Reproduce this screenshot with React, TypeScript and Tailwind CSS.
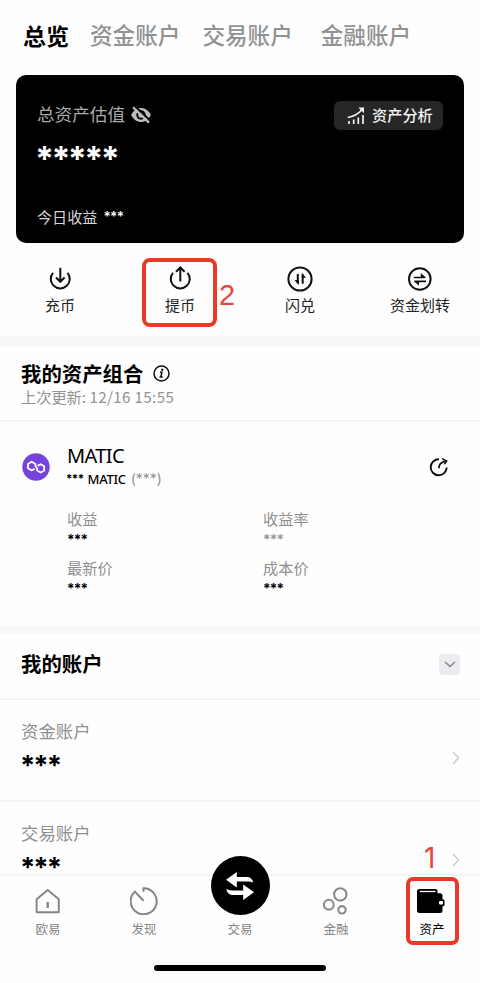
import type { ReactNode } from "react";
import clsx from "clsx";

const tabs = [
  { label: "资金账户", className: "ml-[21px]" },
  { label: "交易账户", className: "ml-[22px]" },
  { label: "金融账户", className: "ml-[28px]" },
];

function Mask({ count = 3, className }: { count?: number; className?: string }) {
  return <span className={clsx("block whitespace-nowrap font-['Inter',sans-serif]", className)}>{"*".repeat(count)}</span>;
}

function EyeOffIcon() {
  return (
    <svg width="20" height="18" viewBox="0 0 20 18" fill="none" className="mt-[2px]">
      <path d="M.2 9C2.400 4.300 6 2 10 2S17.600 4.300 19.800 9C17.600 13.700 14 16 10 16S2.400 13.700.2 9Z" fill="#bdbdbd" />
      <circle cx="10" cy="9" r="4.700" fill="#000" />
      <circle cx="10" cy="9" r="2.800" fill="#bdbdbd" />
      <path d="M3.600-.2 20 15.300" stroke="#000" strokeWidth="2" />
      <path d="M2 1.200 18 16.600" stroke="#bdbdbd" strokeWidth="2.200" />
    </svg>
  );
}

function GrowthIcon() {
  return (
    <svg width="18" height="18" viewBox="0 0 18 18" fill="none" stroke="#f2f2f2" strokeWidth="1.700" className="mt-[2px]">
      <path d="M2 17v-3M6.700 17v-4.500M11.300 17V10.500M16 17V8" />
      <path d="M.8 10.500C6 9.800 11 7.200 15 2.800" />
      <path d="M11.300.6H17V6.300Z" fill="#f2f2f2" stroke="none" />
    </svg>
  );
}

function DepositIcon() {
  return (
    <svg width="26" height="26" viewBox="0 0 26 26" fill="none" stroke="#111" strokeWidth="2">
      <path d="M6 6.800A9.500 9.500 0 1 0 20.500 6.800" />
      <path d="M13.300 1.700V15.300M9 11.500l4.300 4.300L17.600 11.500" />
    </svg>
  );
}

function WithdrawIcon() {
  return (
    <svg width="26" height="26" viewBox="0 0 26 26" fill="none" stroke="#111" strokeWidth="2">
      <path d="M6 6.800A9.500 9.500 0 1 0 20.500 6.800" />
      <path d="M13.300 15.500V1.800M9 5.800l4.300-4.300L17.600 5.800" />
    </svg>
  );
}

function ConvertIcon() {
  return (
    <svg width="26" height="26" viewBox="0 0 26 26" fill="none" stroke="#111" strokeWidth="2">
      <circle cx="13" cy="13" r="11.600" />
      <path d="M10.800 8.100V17.500M15.700 17.700V8.500" />
      <path d="M7.500 14.100h4.200v5ZM19 11.700h-4.200v-5Z" fill="#111" stroke="none" />
    </svg>
  );
}

function TransferIcon() {
  return (
    <svg width="26" height="26" viewBox="0 0 26 26" fill="none" stroke="#111" strokeWidth="2">
      <circle cx="12.800" cy="13" r="10.800" />
      <path d="M6.800 11.500h11.400M7.400 15.300h11.600" strokeWidth="1.700" />
      <path d="M13.800 7.100v4.500h5ZM12 19.700v-4.500H7Z" fill="#111" stroke="none" />
    </svg>
  );
}

function InfoIcon() {
  return (
    <svg width="17" height="17" viewBox="0 0 17 17" fill="none" stroke="#111" strokeWidth="1.500" className="mt-[1px]">
      <circle cx="8.500" cy="8.500" r="7.500" />
      <path d="M7 7.200h1.900l-1.100 4.900h2M6.500 12.100h1.400" strokeWidth="1.500" />
      <circle cx="9.300" cy="4.700" r="1.200" fill="#111" stroke="none" />
    </svg>
  );
}

function PolygonLogo() {
  return (
    <svg width="28" height="28" viewBox="0 0 28 28" fill="none">
      <circle cx="14" cy="14" r="13.700" fill="#7543dc" />
      <path
        d="M12.600 15.900 9.700 17.400 6 15.300V10.900L9.700 8.700 13.400 10.900V12.700L15.200 15.600V17.400L18.700 19.500 22.200 17.400V13.300L18.700 11.200 15.600 12.900"
        stroke="#fff"
        strokeWidth="1.800"
        strokeLinejoin="round"
      />
    </svg>
  );
}

function ShareIcon() {
  return (
    <svg width="20" height="20" viewBox="0 0 20 20" fill="none" stroke="#111" strokeWidth="1.900">
      <path d="M10 2.300A8 8 0 1 0 17.700 10.500" />
      <path d="M9.800 11.300C9.800 7.800 12 5.300 16.300 4.200" />
      <path d="M13 1.600 17.700 4 15.300 7.200" strokeWidth="1.500" />
    </svg>
  );
}

function ChevronRight() {
  return (
    <svg width="8" height="14" viewBox="0 0 8 14" fill="none" stroke="#cfcfcf" strokeWidth="1.700">
      <path d="m1 1 5.500 6L1 13" />
    </svg>
  );
}

function HomeIcon() {
  return (
    <svg width="28" height="28" viewBox="0 0 28 28" fill="none" stroke="#858585" strokeWidth="1.900">
      <path d="M2.600 25.200V12.200L13.700 2.900l11.100 9.300v13Z" strokeLinejoin="round" />
      <path d="M13.700 15v6" strokeWidth="2.400" />
    </svg>
  );
}

function DiscoverIcon() {
  return (
    <svg width="28" height="28" viewBox="0 0 28 28" fill="none" stroke="#858585" strokeWidth="2">
      <path d="M13.500 4.800V1.200A13 13 0 1 1 4.900 4.600L13.500 13.800" />
    </svg>
  );
}

function FinanceIcon() {
  return (
    <svg width="28" height="28" viewBox="0 0 28 28" fill="none" stroke="#8b8b8b" strokeWidth="2.100">
      <circle cx="18.300" cy="7.400" r="6.200" />
      <circle cx="6.800" cy="17.700" r="4.900" />
      <circle cx="20" cy="22.800" r="3.700" />
    </svg>
  );
}

function WalletIcon() {
  return (
    <svg width="28" height="28" viewBox="0 0 28 28" fill="none" className="-ml-[2px]">
      <path d="M0 4.500Q0 2 2.500 2H18.500Q20.500 2 20.500 4V6.300H23Q25.500 6.300 25.500 8.800V23.500Q25.500 26 23 26H2.500Q0 26 0 23.500Z" fill="#000" />
      <path d="M2.800 4.500H18.600" stroke="#fff" strokeWidth="1.300" />
      <rect x="20.600" y="12.300" width="6.900" height="7" rx="1.500" fill="#000" />
      <rect x="22" y="14" width="4" height="3.400" rx="1" fill="#fff" />
    </svg>
  );
}

function TradeIcon() {
  return (
    <svg width="32" height="30" viewBox="0 0 32 30" fill="#fff">
      <path d="M2 8.700 12.800 1v5H23Q28 6 29.300 11.800 27.500 10.600 24 10.600H12.800V16.400Z" />
      <path d="M30 21.300 19.200 29v-5H9Q3.500 24 2.300 17.700 4.500 19.400 8 19.400H19.200V13.600Z" />
    </svg>
  );
}

function Action({ icon, label, marked }: { icon: ReactNode; label: string; marked?: boolean }) {
  return (
    <div className="relative flex flex-col items-center pt-[23px] text-[15px] leading-5 text-[#222]">
      {icon}
      <span className="mt-[3px]">{label}</span>
      {marked && (
        <>
          <div className="absolute left-[22px] top-[15px] h-[69px] w-[75px] rounded-[8px] border-4 border-[#e83a27]" />
          <span className="absolute left-[99px] top-[36px] font-['Liberation_Sans',sans-serif] text-[29px] leading-[32px] text-[#e8483a]">2</span>
        </>
      )}
    </div>
  );
}

function Metric({ label, muted }: { label: string; muted?: boolean }) {
  return (
    <div className="h-[49px]">
      <div className="text-[15.2px] leading-5 text-[#8f8f8f]">{label}</div>
      <Mask
        className={clsx(
          "mt-[1px] text-[13.500px] font-bold leading-5 tracking-[-0.8px]",
          muted ? "text-[#999]" : "text-black",
        )}
      />
    </div>
  );
}

function AccountRow({ label }: { label: string }) {
  return (
    <div className="flex h-[102px] shrink-0 items-start justify-between border-b-2 border-[#f4f4f4] pl-[21px] pr-[20px]">
      <div className="pt-[19px]">
        <div className="text-[17.4px] leading-6 text-[#8f8f8f]">{label}</div>
        <Mask className="-ml-[1px] mt-[6px] text-[27.500px] font-bold leading-8 tracking-[-2px]" />
      </div>
      <div className="mt-[51px]">
        <ChevronRight />
      </div>
    </div>
  );
}

function NavItem({ icon, label, active }: { icon: ReactNode; label: string; active?: boolean }) {
  return (
    <div className="relative flex w-24 flex-col items-center pt-[11px]">
      <div className="flex h-7 items-center justify-center">{icon}</div>
      <span className={clsx("mt-[4px] text-[12.5px] leading-5", active ? "text-black" : "text-[#858585]")}>{label}</span>
      {active && (
        <>
          <div className="absolute left-[22px] top-[1px] h-[68px] w-[53px] rounded-[7px] border-4 border-[#e83a27]" />
          <span className="absolute left-[40px] top-[-34px] font-['Inter',sans-serif] text-[28px] leading-[32px] text-[#e8483a]">1</span>
        </>
      )}
    </div>
  );
}

export default function App() {
  return (
    <div className="relative flex h-[983px] w-[480px] flex-col overflow-hidden bg-[#fefefe] font-['Noto_Sans_CJK_SC',sans-serif] text-black">
      <header className="flex h-[75px] shrink-0 items-start pl-[23px] pt-[19px] text-[22.6px] leading-8 text-[#929292]">
        <span className="text-[23px] font-bold text-black">总览</span>
        {tabs.map((tab) => (
          <span key={tab.label} className={clsx("font-medium", tab.className)}>
            {tab.label}
          </span>
        ))}
      </header>

      <section className="mx-4 flex h-[168px] shrink-0 justify-between rounded-[10px] bg-black pl-[21px] pr-[21px]">
        <div>
          <div className="flex items-center gap-[6px] pt-[27px] text-[17.6px] leading-6 text-[#aaa]">
            总资产估值
            <EyeOffIcon />
          </div>
          <Mask count={5} className="-ml-[2px] mt-[17px] text-[34px] font-bold leading-8 tracking-[-2.600px] text-white" />
          <div className="mt-[29px] flex items-center gap-[6px] text-[15.1px] leading-6 text-[#d5d5d5]">
            今日收益
            <Mask className="text-[13.500px] font-semibold tracking-[-0.600px] text-white" />
          </div>
        </div>
        <button className="mt-[26px] flex h-[29px] w-[109px] items-center gap-[7px] rounded-[6px] bg-[#262626] pb-[2px] pl-[13px] text-[15.2px] font-medium text-[#f2f2f2]">
          <GrowthIcon />
          资产分析
        </button>
      </section>

      <section className="grid h-[93px] shrink-0 grid-cols-4">
        <Action icon={<DepositIcon />} label="充币" />
        <Action icon={<WithdrawIcon />} label="提币" marked />
        <Action icon={<ConvertIcon />} label="闪兑" />
        <Action icon={<TransferIcon />} label="资金划转" />
      </section>
      <div className="h-[10px] shrink-0 bg-[#f7f7f7]" />

      <section className="h-[76px] shrink-0 border-b-2 border-[#f4f4f4] pl-[21px] pt-[15px]">
        <div className="flex items-center gap-[10px] text-[20.4px] font-bold leading-6">
          我的资产组合
          <InfoIcon />
        </div>
        <div className="text-[15.2px] leading-[22px] text-[#929292]">
          上次更新: <span className="tracking-[0.350px]">12/16 15:55</span>
        </div>
      </section>

      <section className="flex h-[203px] shrink-0 pl-[22px] pr-[31px] pt-[20px]">
        <div className="mt-[11px]">
          <PolygonLogo />
        </div>
        <div className="ml-[17px] grow">
          <div className="font-['Noto_Sans',sans-serif] text-[20px] leading-7 tracking-[-0.600px]">MATIC</div>
          <div className="-mt-[1px] flex items-center text-[13px] font-medium leading-5">
            <Mask className="-ml-[1px] text-[11.500px] font-bold tracking-[-0.600px]" />
            <span className="ml-1 font-['Noto_Sans',sans-serif] tracking-[-0.300px]">MATIC</span>
            <span className="ml-[5px] font-['Inter',sans-serif] text-[14px] font-normal text-[#8f8f8f]">(***)</span>
          </div>
          <div className="mt-[19px] grid grid-cols-[196px_1fr]">
            <Metric label="收益" />
            <Metric label="收益率" muted />
            <Metric label="最新价" />
            <Metric label="成本价" />
          </div>
        </div>
        <div className="mt-[15px]">
          <ShareIcon />
        </div>
      </section>
      <div className="h-[9px] shrink-0 bg-[#f8f8f8]" />

      <section className="flex h-[66px] shrink-0 items-center justify-between border-b-2 border-[#f4f4f4] pl-[21px] pr-[20px]">
        <h2 className="mt-[-6px] text-[20.4px] font-bold leading-7">我的账户</h2>
        <div className="mt-[-3px] flex h-[21px] w-[21px] items-center justify-center rounded-[4px] bg-[#ececf0]">
          <svg width="12" height="7" viewBox="0 0 12 7" fill="none" stroke="#858588" strokeWidth="1.500">
            <path d="m1 1 5 4.500L11 1" />
          </svg>
        </div>
      </section>
      <AccountRow label="资金账户" />
      <AccountRow label="交易账户" />

      <nav className="absolute inset-x-0 bottom-0 h-[107px] bg-[#fefefe] shadow-[0_-1px_4px_rgba(0,0,0,0.08)]">
        <div className="flex">
          <NavItem icon={<HomeIcon />} label="欧易" />
          <NavItem icon={<DiscoverIcon />} label="发现" />
          <NavItem
            icon={
              <div className="mb-[31px] flex h-[59px] w-[59px] shrink-0 items-center justify-center rounded-full bg-black">
                <TradeIcon />
              </div>
            }
            label="交易"
          />
          <NavItem icon={<FinanceIcon />} label="金融" />
          <NavItem icon={<WalletIcon />} label="资产" active />
        </div>
        <div className="mx-auto mt-[26px] h-[6px] w-[172px] rounded-full bg-black" />
      </nav>
    </div>
  );
}
